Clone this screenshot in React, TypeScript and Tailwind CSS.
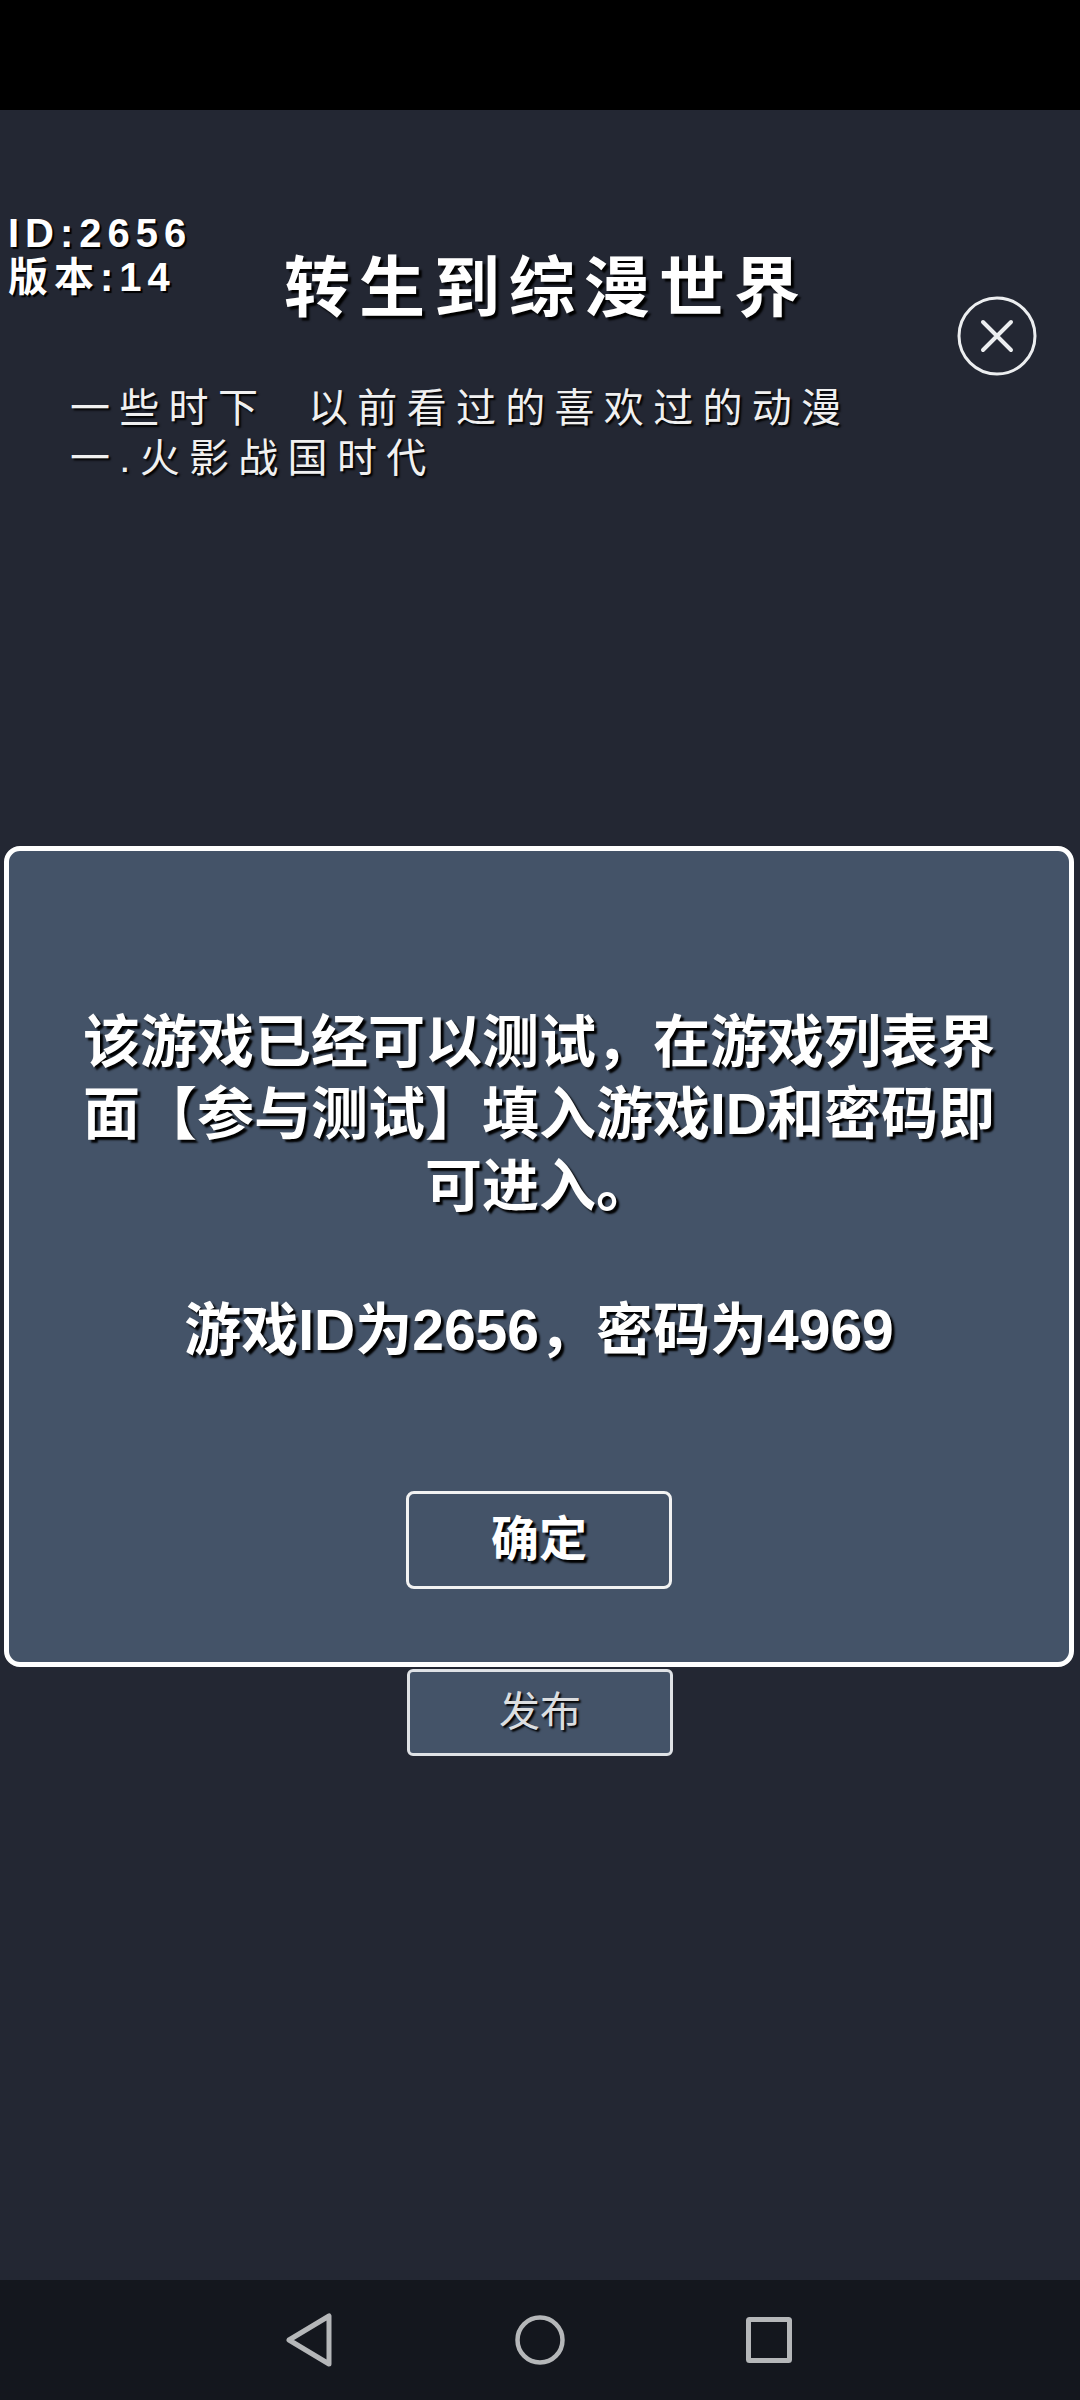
import React from 'react';

const cjk = "font-['Liberation_Sans','Noto_Sans_CJK_SC',sans-serif]";

const modalLines = [
  '该游戏已经可以测试，在游戏列表界',
  '面【参与测试】填入游戏ID和密码即',
  '可进入。',
  '\u00a0',
  '游戏ID为2656，密码为4969',
];

const NavBar = () => (
  <nav className="h-[120px] shrink-0 bg-[#14171e] flex items-center pl-[285px]">
    <svg width="48" height="54" viewBox="0 0 48 54" fill="none" stroke="#b5b7b9" strokeWidth="5" strokeLinejoin="round">
      <path d="M4 27 L44 3 L44 51 Z" />
    </svg>
    <svg className="ml-[182px]" width="50" height="50" viewBox="0 0 50 50" fill="none" stroke="#b5b7b9" strokeWidth="4.5">
      <circle cx="25" cy="25" r="22.5" />
    </svg>
    <svg className="ml-[181px]" width="46" height="46" viewBox="0 0 46 46" fill="none" stroke="#b5b7b9" strokeWidth="5" strokeLinejoin="round">
      <rect x="2.5" y="2.5" width="41" height="41" rx="1" />
    </svg>
  </nav>
);

const CloseButton = () => (
  <svg width="80" height="80" viewBox="0 0 80 80" fill="none" stroke="#eceef0" strokeLinecap="round">
    <circle cx="40" cy="40" r="38" strokeWidth="3" />
    <path d="M26 26 L54 54 M54 26 L26 54" strokeWidth="4" />
  </svg>
);

export default function App() {
  return (
    <div className={`w-[1080px] h-[2400px] flex flex-col bg-black text-white overflow-hidden ${cjk}`}>
      <div className="h-[110px] shrink-0 bg-black" />

      <main className="relative flex-1 bg-[#232733] flex flex-col">
        <div className="flex items-start pt-[101px] pl-[8px]">
          <div className="w-[276px] shrink-0 font-bold text-[40px] leading-[44px] tracking-[6px] [text-shadow:2px_2px_1px_#000]">
            <div>ID:2656</div>
            <div>版本:14</div>
          </div>
          <h1 className="mt-[37px] text-[66px] leading-[80px] font-bold tracking-[9px] whitespace-nowrap [text-shadow:3px_3px_2px_#000]">
            转生到综漫世界
          </h1>
          <div className="ml-[148px] mt-[85px]">
            <CloseButton />
          </div>
        </div>

        <div className="mt-[7px] pl-[70px] text-[40px] leading-[50px] tracking-[9.3px] text-[#f0f0f0] whitespace-pre [text-shadow:2px_2px_2px_#000]">
          <p>一些时下  以前看过的喜欢过的动漫</p>
          <p>一.火影战国时代</p>
        </div>

        <button className="mt-[1186px] mx-auto w-[266px] h-[87px] bg-[#445368] border-[3px] border-[#dfe2e6] rounded-[6px] text-[41px] text-[#dcdee0] [text-shadow:2px_2px_2px_#000]">
          发布
        </button>

        <section className="absolute left-[4px] top-[736px] w-[1070px] h-[821px] bg-[#445368] border-[5px] border-white rounded-[16px] flex flex-col items-center pt-[155px]">
          <div className="text-[57px] leading-[72px] font-semibold text-center whitespace-nowrap [text-shadow:3px_3px_2px_#000]">
            {modalLines.map((line, i) => (
              <p key={i}>{line}</p>
            ))}
          </div>
          <button className="mt-[125px] w-[266px] h-[98px] border-[3px] border-[#f2f2f2] rounded-[8px] text-[48px] font-bold [text-shadow:3px_3px_2px_#000]">
            确定
          </button>
        </section>
      </main>

      <NavBar />
    </div>
  );
}
